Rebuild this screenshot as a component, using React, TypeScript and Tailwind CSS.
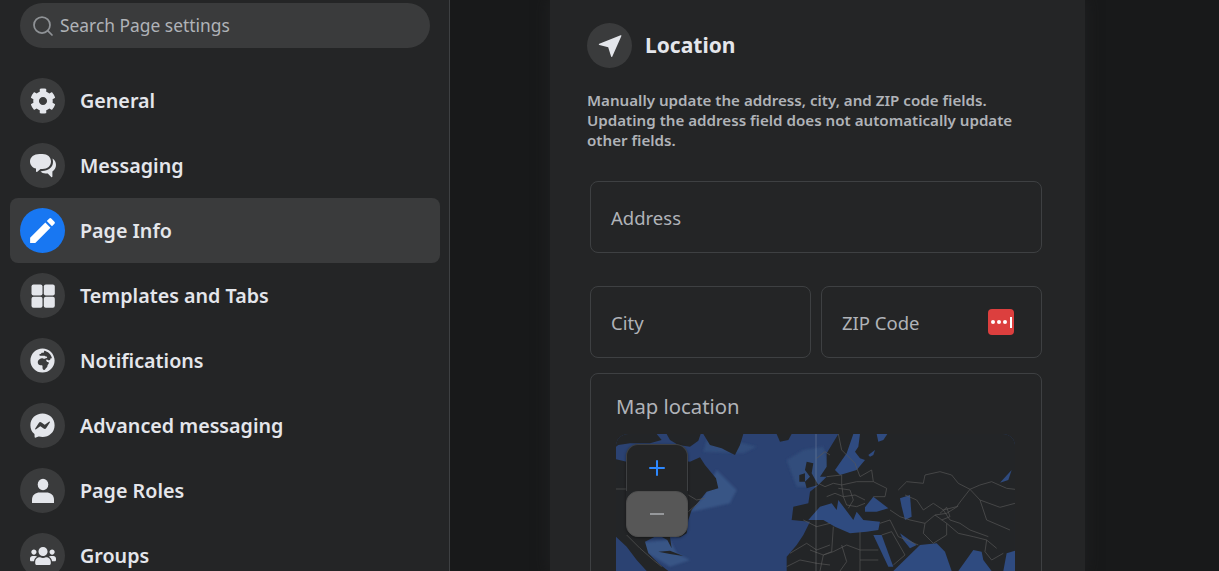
import { FaCog, FaFacebookMessenger, FaGlobeAfrica, FaUsers } from 'react-icons/fa';
import { MdEdit } from 'react-icons/md';
import { Plus, Search } from 'lucide-react';
import type { ReactNode } from 'react';

function ChatIcon() {
  return (
    <svg viewBox="0 0 26 24" className="h-[24px] w-[26px]" fill="#e4e6eb">
      <path d="M9.500 0h3C17.500 0 21 3 21 7.500S17.500 15 12.500 15H10.500l-3.200 2.800c-.6.500-1.300.1-1.300-.6v-2.600C2.500 13.800 0 11 0 7.500 0 3 4 0 9.500 0z" />
      <path d="M22.500 4.500C24.800 6 26 8.300 26 11c0 2.800-1.500 5.200-3.600 6.500v4.900c0 .6-.7 1-1.200.5L17.800 19.500h-2.300c-2 0-3.800-.7-5-2l2-.5c5.500 0 10.500-3.500 10.500-9 0-1.200-.2-2.400-.5-3.500z" />
    </svg>
  );
}

function GridIcon() {
  return (
    <svg viewBox="0 0 24 24" className="h-[24px] w-[24px]" fill="#e4e6eb">
      <rect x="0.500" y="0.500" width="11" height="11" rx="2" />
      <rect x="12.800" y="0.500" width="11" height="11" rx="2" />
      <rect x="0.500" y="12.800" width="11" height="11" rx="2" />
      <rect x="12.800" y="12.800" width="11" height="11" rx="2" />
    </svg>
  );
}

function PersonIcon() {
  return (
    <svg viewBox="0 0 24 26" className="h-[26px] w-[24px]" fill="#e4e6eb">
      <ellipse cx="12" cy="6.500" rx="5.300" ry="5.800" />
      <path d="M1 25v-3.500C1 17 5 14.500 8.500 14.500h7C19 14.500 23 17 23 21.500V25z" />
    </svg>
  );
}

function LocationArrow() {
  return (
    <svg viewBox="0 0 24 24" className="h-[24px] w-[24px]" fill="#e4e6eb">
      <path d="M22.600 1.200 1.300 9.700c-.7.300-.6 1 .1 1.200l8.800 2.400 2.900 9.300c.2.600.9.700 1.100.1l9.200-20.700c.2-.6-.3-1-.8-.8z" />
    </svg>
  );
}

const navItems: { label: string; icon: ReactNode; active?: boolean }[] = [
  { label: 'General', icon: <FaCog size={26} color="#e4e6eb" /> },
  { label: 'Messaging', icon: <ChatIcon /> },
  { label: 'Page Info', icon: <MdEdit size={33} color="#ffffff" />, active: true },
  { label: 'Templates and Tabs', icon: <GridIcon /> },
  { label: 'Notifications', icon: <FaGlobeAfrica size={25} color="#e4e6eb" /> },
  { label: 'Advanced messaging', icon: <FaFacebookMessenger size={25} color="#e4e6eb" /> },
  { label: 'Page Roles', icon: <PersonIcon /> },
  { label: 'Groups', icon: <FaUsers size={26} color="#e4e6eb" /> },
];

function Sidebar() {
  return (
    <aside className="h-full w-[450px] shrink-0 border-r border-[#3e4042] bg-[#242526] pt-[3px]">
      <div className="ml-5 mr-[19px] flex h-[45px] items-center gap-[5px] rounded-full bg-[#3a3b3c] pl-[11px]">
        <Search size={24} color="#8f9296" strokeWidth={1.75} />
        <span className="text-[17.400px] text-[#b0b3b8]">Search Page settings</span>
      </div>
      <nav className="mt-5 pl-[10px] pr-[9px]">
        {navItems.map((item) => (
          <div
            key={item.label}
            className={`flex h-[65px] items-center gap-[15px] rounded-lg px-[10px] ${item.active ? 'bg-[#3a3b3c]' : ''}`}
          >
            <div
              className={`flex h-[45px] w-[45px] items-center justify-center rounded-full ${item.active ? 'bg-[#1877f2]' : 'bg-[#3a3b3c]'}`}
            >
              {item.icon}
            </div>
            <span className="text-[19.700px] font-semibold text-[#e4e6eb]">{item.label}</span>
          </div>
        ))}
      </nav>
    </aside>
  );
}

function Field({ label, className, children }: { label: string; className?: string; children?: ReactNode }) {
  return (
    <div className={`flex h-[72px] items-center justify-between rounded-lg border border-[#3e4042] px-5 ${className ?? ''}`}>
      <span className="pt-[2px] text-[18.500px] text-[#b0b3b8]">{label}</span>
      {children}
    </div>
  );
}

const borders6 = [
  '78,207 108,207',
  '295,225 320,240 345,235',
  '295,275 330,245',
  '110,345 150,385 190,420 215,440',
  '600,400 650,370 680,390 720,375',
  '640,300 680,320 720,310',
  '680,115 705,95 720,105',
  '590,440 630,420 680,430 720,435',
];

const borders7 = [
  '265,210 290,185 340,190 345,165 390,155 425,165 445,190 480,208 510,195 545,185 590,205 615,208',
  '480,208 510,240 570,262 615,250',
  '480,208 455,240 440,260 400,270 370,250 340,270 320,240 285,225',
  '85,42 95,90 135,130 150,170 185,150 190,185 230,205 225,230 190,230',
  '50,170 95,165 95,195 140,185 190,185',
  '25,190 45,200 70,190 95,195 100,230 135,225 165,240',
  '50,230 75,220 100,230 110,255 140,260 165,250',
  '85,205 120,210 130,240 115,265',
  '240,270 270,290 300,300 345,310 375,285 410,280 445,258',
  '345,310 340,340 370,370 410,345 410,310 375,285',
  '410,310 445,340 490,350 530,360 560,385',
  '530,360 525,395 545,420 580,400',
  '0,390 40,405 70,395 110,375 150,390 205,390',
  '70,320 65,395 40,405 30,453',
  '150,335 150,390 150,453',
  '95,375 110,425 90,453',
  '210,310 240,300 265,350 325,375',
  '215,345 245,335 285,405 250,435',
  '150,420 205,420',
  '400,270 420,300 450,310 480,330 535,350',
  '510,240 530,300 600,330',
  '390,280 410,262 420,290 395,300',
];

function MapView() {
  return (
    <svg viewBox="616 434 399 137" preserveAspectRatio="none" className="h-full w-full">
      <defs>
        <filter id="soft" x="-20%" y="-20%" width="140%" height="140%">
          <feGaussianBlur stdDeviation="2.500" />
        </filter>
      </defs>
      <rect x="616" y="434" width="399" height="137" fill="#2b4272" />
      {/* north atlantic shallows */}
      <g transform="translate(590 420) scale(0.3333)" filter="url(#soft)">
        <path d="M340,95 460,100 500,80 420,60 350,60 Z" fill="#324d7c" />
        <path d="M380,150 440,210 420,250 330,270 300,275 340,230 Z" fill="#385585" />
        <path d="M590,120 640,90 700,80 720,150 690,200 620,200 Z" fill="#324d7c" />
        <path d="M130,370 240,360 260,400 300,420 240,440 190,410 Z" fill="#385585" />
      </g>
      <g transform="translate(590 420) scale(0.3333)" fill="#232527">
        {/* baffin, greenland, iceland */}
        <path d="M230,42 332,42 325,62 300,80 265,75 240,60 Z" />
        <path d="M340,42 460,42 450,75 435,105 415,95 395,85 360,75 Z" />
        <path d="M560,42 605,42 595,60 570,65 Z" />
        <path d="M78,42 200,42 215,60 180,70 120,70 85,75 78,80 Z" />
        {/* north america */}
        <path d="M78,118 110,125 190,110 265,120 300,125 330,112 345,135 378,175 385,205 350,215 330,240 305,270 295,300 290,340 270,352 240,350 245,385 232,360 205,345 165,365 175,400 205,430 235,453 170,453 140,420 110,380 78,350 Z" />
        {/* cuba */}
        <path d="M205,395 240,392 280,408 240,402 Z" />
        {/* britain, ireland */}
        <path d="M650,125 670,130 665,160 685,195 650,205 645,185 660,170 645,150 Z" />
        <path d="M628,165 645,160 645,185 628,185 Z" />
      </g>
      <g transform="translate(810 420) scale(0.3333)">
        <path
          fill="#232527"
          d="M85,42 615,42 615,453 -70,453 -70,410 -40,375 -20,345 -5,315 0,305 -55,300 -50,260 -5,250 0,215 25,195 50,170 30,170 50,140 50,100 Z"
        />
        <g fill="#2f4b80">
          <path d="M130,42 150,42 145,80 135,95 150,115 165,120 140,150 90,165 75,150 110,100 Z" />
          <path d="M200,42 232,42 220,60 205,65 Z" />
          <path d="M175,105 195,90 190,105 180,110 Z" />
          <path d="M-5,300 30,260 65,250 80,270 85,240 130,300 140,275 160,300 210,305 205,330 170,335 120,340 75,320 40,300 Z" />
          <path d="M165,262 190,230 235,265 200,275 165,275 Z" />
          <path d="M270,235 300,225 305,290 285,300 275,260 Z" />
          <path d="M190,345 215,345 250,440 235,440 Z" />
          <path d="M270,340 320,375 300,385 280,360 Z" />
          <path d="M250,453 330,375 380,370 405,395 425,453 Z" />
          <path d="M445,453 490,390 515,395 520,420 545,453 Z" />
          <path d="M580,453 590,400 615,392 615,453 Z" />
          <path d="M570,188 605,150 595,180 Z" />
        </g>
      </g>
      <g transform="translate(590 420) scale(0.3333)" fill="none" stroke="#585858" strokeWidth="2">
        {borders6.map((pts) => (
          <polyline key={pts} points={pts} />
        ))}
      </g>
      <g transform="translate(810 420) scale(0.3333)" fill="none" stroke="#585858" strokeWidth="2">
        {borders7.map((pts) => (
          <polyline key={pts} points={pts} />
        ))}
      </g>
      {/* prime meridian */}
      <line x1="816" y1="434" x2="816" y2="571" stroke="#ffffff" strokeOpacity="0.18" />
    </svg>
  );
}

function LocationCard() {
  return (
    <section className="ml-[100px] h-full w-[535px] shrink-0 bg-[#242526] pl-[37px] pr-[43px] pt-[23px] shadow-[0_0_14px_#202122]">
      <div className="flex items-center gap-[13px]">
        <div className="flex h-[45px] w-[45px] items-center justify-center rounded-full bg-[#3a3b3c]">
          <LocationArrow />
        </div>
        <h2 className="pt-[1px] text-[21px] font-bold text-[#e4e6eb]">Location</h2>
      </div>
      <p className="mt-[22px] w-[440px] text-[15.150px] leading-[20px] font-semibold text-[#b0b3b8]">
        Manually update the address, city, and ZIP code fields. Updating the address field does not automatically update other fields.
      </p>
      <div className="ml-[3px] mt-[31px] w-[452px]">
        <Field label="Address" />
        <div className="mt-[33px] flex gap-[10px]">
          <Field label="City" className="w-[221px]" />
          <Field label="ZIP Code" className="flex-1 pr-[27px]">
            <div className="relative h-[26px] w-[26px] rounded bg-[#dc3f3e]">
              <div className="flex h-full items-center gap-[2px] pl-[3px]">
                <span className="h-[4px] w-[4px] rounded-full bg-white" />
                <span className="h-[4px] w-[4px] rounded-full bg-white" />
                <span className="h-[4px] w-[4px] rounded-full bg-white" />
                <span className="ml-[1px] h-[11px] w-[1.500px] bg-white" />
              </div>
            </div>
          </Field>
        </div>
        <div className="mt-[15px] h-[300px] rounded-lg border border-[#3e4042] px-[25px] pt-[18px]">
          <div className="text-[20.300px] leading-[28px] text-[#b0b3b8]">Map location</div>
          <div className="relative mt-[14px] h-[137px] w-[399px] overflow-hidden rounded-t-xl">
            <MapView />
            <div className="absolute left-[10px] top-[10px] w-[62px] rounded-xl shadow-[0_1px_3px_rgba(0,0,0,0.4)]">
              <div className="flex h-[47px] items-center justify-center rounded-t-xl border border-b-0 border-[#3e4042] bg-[#242526]">
                <Plus size={24} color="#2d88ff" strokeWidth={2} />
              </div>
              <div className="flex h-[46px] items-center justify-center rounded-xl border border-[#4f4f4f] bg-[#575757]">
                <span className="h-[2px] w-[14px] bg-[#96989b]" />
              </div>
            </div>
          </div>
        </div>
      </div>
    </section>
  );
}

export default function App() {
  return (
    <div className="flex h-[571px] w-[1219px] overflow-hidden bg-[#18191a] font-['Noto_Sans',sans-serif]">
      <Sidebar />
      <LocationCard />
    </div>
  );
}
